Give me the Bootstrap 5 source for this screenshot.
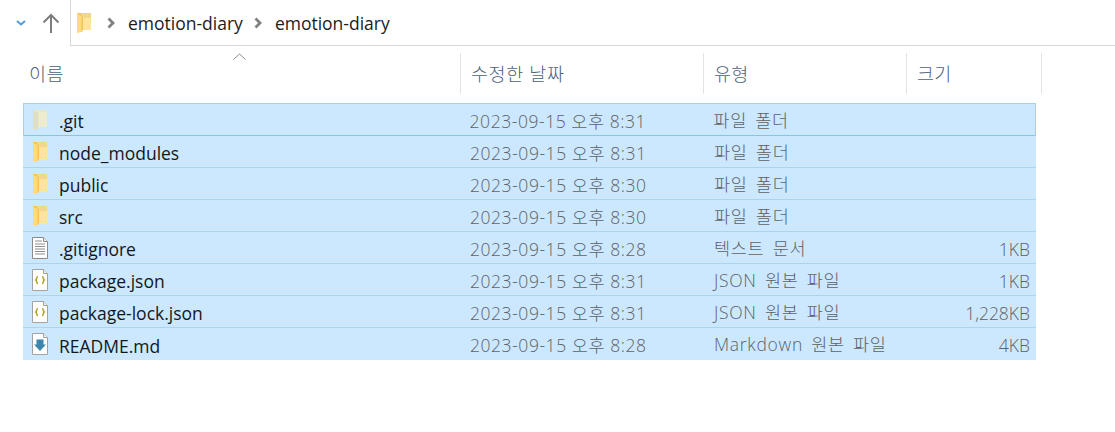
<!DOCTYPE html>
<html lang="ko">
<head>
<meta charset="utf-8">
<title>emotion-diary</title>
<link rel="stylesheet" href="https://cdn.jsdelivr.net/npm/bootstrap@5.3.0/dist/css/bootstrap.min.css">
<style>
html,body{margin:0;height:432px;overflow:hidden;background:#fff}
body{font-family:"Open Sans","Noto Sans CJK KR",sans-serif;font-size:16px;color:#1a1a1a;line-height:1.2}
.topbar{height:46px}
.navside{width:70px;padding-left:15px;gap:15px}
.pathbox{border-left:1px solid #d9d9d9;border-bottom:1px solid #d9d9d9;padding-left:4px;font-size:17.5px;color:#1c1c1c}
.pathbox span{position:relative;top:1px}
.crumbsep{margin:0 13px 0 14px}
.crumbsep2{margin:0 13px 0 11px}
.sortmark{height:14px;padding-left:233px;padding-bottom:0}
.headrow{height:41px;margin-top:-7px;padding-left:19px;color:#4c607a;font-size:18.5px;font-weight:300}
.hcol{height:41px;display:flex;align-items:center;padding-left:10px;padding-top:2px;border-right:1px solid #e3e3e3;letter-spacing:.6px}
.hcol.w-size,.hcol.w-type{letter-spacing:.2px}
.w-name{width:442px}.w-date{width:243px}.w-type{width:203px}.w-size{width:135px}
.rows{margin:9px 0 0 23px;width:1013px}
.frow{height:32px;background:#cce8ff;border-bottom:1px solid #a6d5fc;color:#111}
.frow:last-child{border-bottom:0}
.frow.first{height:33px;border:1px solid #99d1ff;border-bottom-color:#7fc4ff}
.frow>div{padding-top:3px}
.frow>.cname{padding-top:0}
.cname{width:437px;padding-left:8px}
.cname svg{flex:none;margin-right:10px}
.cname span{position:relative;top:2px}
.cdate{width:243px;padding-left:10px;color:#5e6266;letter-spacing:.55px}
.frow>.ctype{width:203px;padding-left:11px;padding-top:1px;color:#5e6266;letter-spacing:.7px;word-spacing:3px}
.csize{width:130px;padding-right:6px;text-align:right;color:#5e6266}
.frow.first .cname{padding-left:7px;width:436px}
.fdata{font-size:17.5px;font-weight:300}
.fname{font-weight:400;color:#14171a}
</style>
</head>
<body>
<svg width="0" height="0" class="position-absolute">
<defs>
<symbol id="folder" viewBox="0 0 18 22"><path d="M3 1h13v17H3z" fill="#f6c85f"/><path d="M8 3h8v15H8z" fill="#ffe49a"/><path d="M6 1h10v5H6z" fill="#f0d78c"/><path d="M2 1l5 3v16l-5 1z" fill="#ffdb7a"/><path d="M2 1l5 3v16" fill="none" stroke="#e8bd55" stroke-width=".7"/></symbol>
<symbol id="gitfolder" viewBox="0 0 18 22"><path d="M3 1h13v17H3z" fill="#e9e7c8"/><path d="M8 3h8v15H8z" fill="#eeeccf"/><path d="M2 1l5 3v16l-5 1z" fill="#dee0c6"/></symbol>
<symbol id="doc" viewBox="0 0 18 22"><path d="M1.500 .5h11l4 4v17h-15z" fill="#fff" stroke="#8b8b8b"/><path d="M12.500 .5v4h4" fill="#eee" stroke="#8b8b8b"/><path d="M4 4h7M4 7h10M4 9.500h10M4 12h10M4 14.500h10M4 17h10" stroke="#8e8e8e"/></symbol>
<symbol id="jsonf" viewBox="0 0 18 22"><path d="M1.500 .5h11l4 4v17h-15z" fill="#fff" stroke="#a2a2a2"/><path d="M12.500 .5v4h4" fill="#eee" stroke="#a2a2a2"/><path d="M7 7.500c-2 0-1 3-2 3.500 1 .5 0 3.500 2 3.500M11 7.500c2 0 1 3 2 3.500-1 .5 0 3.500-2 3.500" fill="none" stroke="#b5a92a" stroke-width="1.700"/></symbol>
<symbol id="mdf" viewBox="0 0 18 22"><path d="M1.500 .5h11l4 4v17h-15z" fill="#fff" stroke="#a2a2a2"/><path d="M12.500 .5v4h4" fill="#eee" stroke="#a2a2a2"/><path d="M5.500 6.500h7v5h2.500L9 18l-6-6.500h2.500z" fill="#3d85ac"/></symbol>
</defs>
</svg>
<div class="topbar d-flex">
  <div class="navside d-flex align-items-center">
    <svg width="12" height="8" viewBox="0 0 12 8"><path d="M2 2l4 3.500L10 2" fill="none" stroke="#4f9be0" stroke-width="2"/></svg>
    <svg width="18" height="20" viewBox="0 0 18 20"><path d="M9 20V2M1.500 9.500L9 2l7.500 7.500" fill="none" stroke="#7d7d7d" stroke-width="2"/></svg>
  </div>
  <div class="pathbox flex-grow-1 d-flex align-items-center">
    <svg width="18" height="22" viewBox="0 0 18 22"><use href="#folder"/></svg>
    <svg class="crumbsep" width="8" height="12" viewBox="0 0 8 12"><path d="M1.500 1.500L6 6l-4.500 4.500" fill="none" stroke="#808080" stroke-width="2.800"/></svg>
    <span>emotion-diary</span>
    <svg class="crumbsep2" width="8" height="12" viewBox="0 0 8 12"><path d="M1.500 1.500L6 6l-4.500 4.500" fill="none" stroke="#808080" stroke-width="2.800"/></svg>
    <span>emotion-diary</span>
  </div>
</div>
<div class="sortmark d-flex align-items-end"><svg width="13" height="7" viewBox="0 0 13 7"><path d="M.5 6.500l6-5.500 6 5.500" fill="none" stroke="#8a8a8a"/></svg></div>
<div class="headrow d-flex">
  <div class="hcol w-name">이름</div>
  <div class="hcol w-date">수정한 날짜</div>
  <div class="hcol w-type">유형</div>
  <div class="hcol w-size">크기</div>
</div>
<div class="rows">
  <div class="frow first d-flex align-items-center fdata"><div class="cname d-flex align-items-center fname"><svg width="18" height="22"><use href="#gitfolder"/></svg><span>.git</span></div><div class="cdate">2023-09-15 오후 8:31</div><div class="ctype">파일 폴더</div><div class="csize"></div></div>
  <div class="frow d-flex align-items-center fdata"><div class="cname d-flex align-items-center fname"><svg width="18" height="22"><use href="#folder"/></svg><span>node_modules</span></div><div class="cdate">2023-09-15 오후 8:31</div><div class="ctype">파일 폴더</div><div class="csize"></div></div>
  <div class="frow d-flex align-items-center fdata"><div class="cname d-flex align-items-center fname"><svg width="18" height="22"><use href="#folder"/></svg><span>public</span></div><div class="cdate">2023-09-15 오후 8:30</div><div class="ctype">파일 폴더</div><div class="csize"></div></div>
  <div class="frow d-flex align-items-center fdata"><div class="cname d-flex align-items-center fname"><svg width="18" height="22"><use href="#folder"/></svg><span>src</span></div><div class="cdate">2023-09-15 오후 8:30</div><div class="ctype">파일 폴더</div><div class="csize"></div></div>
  <div class="frow d-flex align-items-center fdata"><div class="cname d-flex align-items-center fname"><svg width="18" height="22"><use href="#doc"/></svg><span>.gitignore</span></div><div class="cdate">2023-09-15 오후 8:28</div><div class="ctype">텍스트 문서</div><div class="csize">1KB</div></div>
  <div class="frow d-flex align-items-center fdata"><div class="cname d-flex align-items-center fname"><svg width="18" height="22"><use href="#jsonf"/></svg><span>package.json</span></div><div class="cdate">2023-09-15 오후 8:31</div><div class="ctype">JSON 원본 파일</div><div class="csize">1KB</div></div>
  <div class="frow d-flex align-items-center fdata"><div class="cname d-flex align-items-center fname"><svg width="18" height="22"><use href="#jsonf"/></svg><span>package-lock.json</span></div><div class="cdate">2023-09-15 오후 8:31</div><div class="ctype">JSON 원본 파일</div><div class="csize">1,228KB</div></div>
  <div class="frow d-flex align-items-center fdata"><div class="cname d-flex align-items-center fname"><svg width="18" height="22"><use href="#mdf"/></svg><span>README.md</span></div><div class="cdate">2023-09-15 오후 8:28</div><div class="ctype">Markdown 원본 파일</div><div class="csize">4KB</div></div>
</div>
<script src="https://cdn.jsdelivr.net/npm/bootstrap@5.3.0/dist/js/bootstrap.bundle.min.js"></script>
</body>
</html>
